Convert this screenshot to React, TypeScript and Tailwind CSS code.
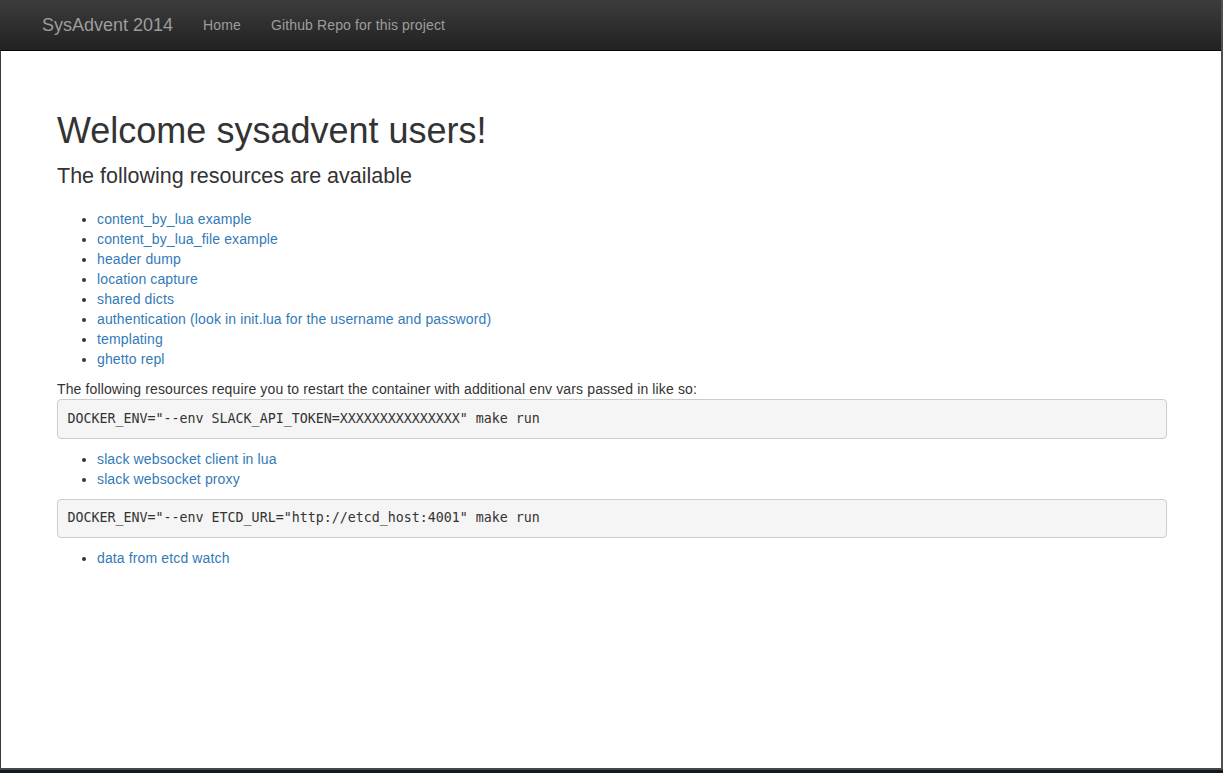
import React from "react";

const links1 = [
  "content_by_lua example",
  "content_by_lua_file example",
  "header dump",
  "location capture",
  "shared dicts",
  "authentication (look in init.lua for the username and password)",
  "templating",
  "ghetto repl",
];

function LinkList({ items }: { items: string[] }) {
  return (
    <ul className="list-disc pl-[40px]">
      {items.map((t) => (
        <li key={t} className="leading-[20px]">
          <a href="#" className="text-[#337ab7]">
            {t}
          </a>
        </li>
      ))}
    </ul>
  );
}

function Pre({ children }: { children: React.ReactNode }) {
  return (
    <pre
      className="border border-[#cccccc] bg-[#f5f5f5] rounded-[4px] px-[9.5px] py-[9.5px] text-[13.3px] leading-[18.57px] text-[#333] tracking-normal"
      style={{ fontFamily: '"DejaVu Sans Mono", monospace' }}
    >
      {children}
    </pre>
  );
}

export default function App() {
  return (
    <div
      className="w-[1223px] h-[773px] bg-[#0e1c25] flex flex-col text-[14px] text-[#333] tracking-[0.13px]"
      style={{ fontFamily: '"Liberation Sans", Arial, sans-serif' }}
    >
      <div className="h-[770px] flex flex-col border-b-2 border-[#474747] border-r-2 border-r-[#505050]">
        <nav className="h-[51px] shrink-0 border-b border-[#080808] bg-gradient-to-b from-[#3c3c3c] to-[#222222] flex items-center pl-[27px]">
          <a href="#" className="px-[15px] text-[18px] leading-[20px] tracking-normal text-[#9d9d9d]">
            SysAdvent 2014
          </a>
          <a href="#" className="px-[15px] leading-[20px] text-[#9d9d9d]">
            Home
          </a>
          <a href="#" className="px-[15px] leading-[20px] text-[#9d9d9d]">
            Github Repo for this project
          </a>
        </nav>
        <div className="flex-1 bg-white border-l border-[#3b3b3b]">
          <div className="ml-[56px] w-[1110px] pt-[60px]">
            <h1 className="text-[36px] leading-[39.6px] font-normal tracking-normal">Welcome sysadvent users!</h1>
            <h3 className="mt-[14px] text-[21.5px] leading-[23.65px] font-normal tracking-normal">
              The following resources are available
            </h3>
            <div className="mt-[21px]">
              <LinkList items={links1} />
            </div>
            <p className="mt-[10px] leading-[20px]">
              The following resources require you to restart the container with additional env vars passed in like so:
            </p>
            <Pre>DOCKER_ENV="--env SLACK_API_TOKEN=XXXXXXXXXXXXXXX" make run</Pre>
            <div className="mt-[10px] mb-[10px]">
              <LinkList items={["slack websocket client in lua", "slack websocket proxy"]} />
            </div>
            <Pre>DOCKER_ENV="--env ETCD_URL="http://etcd_host:4001" make run</Pre>
            <div className="mt-[10px]">
              <LinkList items={["data from etcd watch"]} />
            </div>
          </div>
        </div>
      </div>
    </div>
  );
}
